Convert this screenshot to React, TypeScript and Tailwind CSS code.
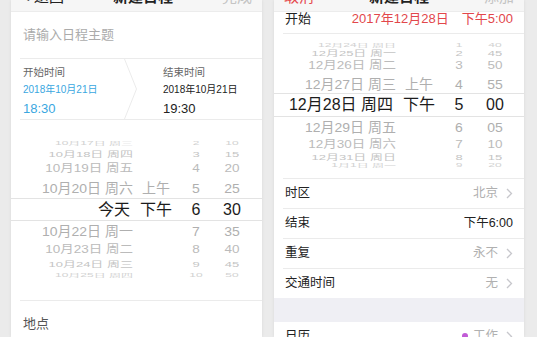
import React from "react";

type Row = { h: string; d: number; date: string; ap: string; hr: string; mn: string };

const distCls: Record<number, string> = {
  0: "text-[16px] text-[#1c1c1c]",
  1: "text-[14px] text-[#afafaf] scale-y-[0.95]",
  2: "text-[13.5px] text-[#bbbbbb] scale-y-[0.82]",
  3: "text-[13px] text-[#c4c4c4] scale-y-[0.62]",
  4: "text-[12px] text-[#d2d2d2] scale-y-[0.38]",
};

const leftRows: Row[] = [
  { h: "h-[10px]", d: 4, date: "10月17日 周三", ap: "", hr: "2", mn: "10" },
  { h: "h-[12px]", d: 3, date: "10月18日 周四", ap: "", hr: "3", mn: "15" },
  { h: "h-[18px]", d: 2, date: "10月19日 周五", ap: "", hr: "4", mn: "20" },
  { h: "h-[20px]", d: 1, date: "10月20日 周六", ap: "上午", hr: "5", mn: "25" },
  { h: "h-[23px]", d: 0, date: "今天", ap: "下午", hr: "6", mn: "30" },
  { h: "h-[20px]", d: 1, date: "10月22日 周一", ap: "", hr: "7", mn: "35" },
  { h: "h-[17px]", d: 2, date: "10月23日 周二", ap: "", hr: "8", mn: "40" },
  { h: "h-[12px]", d: 3, date: "10月24日 周三", ap: "", hr: "9", mn: "45" },
  { h: "h-[10px]", d: 4, date: "10月25日 周四", ap: "", hr: "10", mn: "50" },
];

const rightRows: Row[] = [
  { h: "h-[8px]", d: 4, date: "12月24日 周日", ap: "", hr: "1", mn: "40" },
  { h: "h-[9px]", d: 3, date: "12月25日 周一", ap: "", hr: "2", mn: "45" },
  { h: "h-[16px]", d: 2, date: "12月26日 周二", ap: "", hr: "3", mn: "50" },
  { h: "h-[19px]", d: 1, date: "12月27日 周三", ap: "上午", hr: "4", mn: "55" },
  { h: "h-[24px]", d: 0, date: "12月28日 周四", ap: "下午", hr: "5", mn: "00" },
  { h: "h-[20px]", d: 1, date: "12月29日 周五", ap: "", hr: "6", mn: "05" },
  { h: "h-[15px]", d: 2, date: "12月30日 周六", ap: "", hr: "7", mn: "10" },
  { h: "h-[10px]", d: 3, date: "12月31日 周日", ap: "", hr: "8", mn: "15" },
  { h: "h-[6px]", d: 4, date: "1月1日 周一", ap: "", hr: "9", mn: "20" },
];

function Picker({ rows }: { rows: Row[] }) {
  return (
    <div className="flex flex-col">
      {rows.map((r, i) => (
        <div
          key={i}
          className={`${r.h} shrink-0 flex items-center leading-none whitespace-nowrap ${
            r.d === 0 ? "border-y border-[#e3e3e3]" : ""
          }`}
        >
          <div className={`flex items-center w-full ${distCls[r.d]}`}>
            <span className={`w-[122px] text-right ${r.d === 0 ? "pr-[3px]" : ""}`}>{r.date}</span>
            <span className="ml-[6px] w-[34px] text-center">{r.ap}</span>
            <span className="ml-[8px] w-[30px] text-center">{r.hr}</span>
            <span className="ml-[6px] w-[30px] text-center">{r.mn}</span>
          </div>
        </div>
      ))}
    </div>
  );
}

function Chev() {
  return (
    <svg width="7" height="11" viewBox="0 0 7 11" className="ml-[8px]">
      <polyline points="1,1 5.5,5.5 1,10" fill="none" stroke="#c7c7cc" strokeWidth="1.3" />
    </svg>
  );
}

function Nav({ left, right, leftCls, rightCls }: { left: string; right: string; leftCls: string; rightCls: string }) {
  return (
    <div className="h-[12px] overflow-hidden bg-[#f6f6f6] border-b border-[#ececec]">
      <div className="h-[24px] -mt-[15px] flex items-center justify-between px-[10px] text-[15px]">
        <span className={leftCls}>{left}</span>
        <span className="font-bold text-[#222]">新建日程</span>
        <span className={rightCls}>{right}</span>
      </div>
    </div>
  );
}

function Divider({ inset = true }: { inset?: boolean }) {
  return <div className={`h-px bg-[#ebebeb] ${inset ? "ml-[9px]" : ""}`} />;
}

function ListRow({ label, value, dark, chevron }: { label: string; value: string; dark?: boolean; chevron?: boolean }) {
  return (
    <div className="h-[29px] flex items-center justify-between pl-[11px] pr-[11px] text-[12.5px]">
      <span className="text-[#222]">{label}</span>
      <span className="flex items-center">
        <span className={dark ? "text-[#222]" : "text-[#b0b0b0]"}>{value}</span>
        {chevron && <Chev />}
      </span>
    </div>
  );
}

export default function App() {
  return (
    <div className="w-[537px] h-[337px] overflow-hidden bg-[#ebebeb] flex items-start pl-[11px] [font-family:'Liberation_Sans','Noto_Sans_CJK_SC',sans-serif]">
      {/* Left phone */}
      <div className="w-[251px] h-[337px] overflow-hidden bg-white shrink-0 shadow-[0_0_3px_rgba(0,0,0,0.08)]">
        <Nav left="< 返回" right="完成" leftCls="text-[#222]" rightCls="text-[#c4c4c4]" />
        <div className="h-[46px] flex items-center pl-[12px] text-[13px] text-[#ababab]">请输入日程主题</div>
        <Divider />
        <div className="h-[60px] flex">
          <div className="w-[113px] pl-[12px] pt-[6px] flex flex-col">
            <span className="text-[10.5px] leading-[14px] text-[#666]">开始时间</span>
            <span className="mt-[4px] text-[10px] leading-[14px] text-[#3aa7df]">2018年10月21日</span>
            <span className="mt-[3px] text-[13px] leading-[18px] text-[#3aa7df]">18:30</span>
          </div>
          <svg width="14" height="60" viewBox="0 0 14 60">
            <polyline points="0.5,0 12.5,30 0.5,60" fill="none" stroke="#ebebeb" strokeWidth="1" />
          </svg>
          <div className="pl-[25px] pt-[6px] flex flex-col">
            <span className="text-[10.5px] leading-[14px] text-[#666]">结束时间</span>
            <span className="mt-[4px] text-[10px] leading-[14px] text-[#222]">2018年10月21日</span>
            <span className="mt-[3px] text-[13px] leading-[18px] text-[#222]">19:30</span>
          </div>
        </div>
        <Divider />
        <div className="pt-[18px] pb-[20px]">
          <Picker rows={leftRows} />
        </div>
        <Divider />
        <div className="h-[46px] flex items-center pl-[12px] text-[13px] text-[#555]">地点</div>
      </div>

      <div className="w-[12px] shrink-0" />

      {/* Right phone */}
      <div className="w-[250px] h-[337px] overflow-hidden bg-white shrink-0 shadow-[0_0_3px_rgba(0,0,0,0.08)]">
        <Nav left="取消" right="添加" leftCls="text-[#e5484d]" rightCls="text-[#c4c4c4]" />
        <div className="h-[21px] flex items-start justify-between pl-[11px] pr-[11px] text-[13px] leading-[14px]">
          <span className="text-[#222]">开始</span>
          <span className="text-[#e2474b] flex">
            <span>2017年12月28日</span>
            <span className="ml-[13px]">下午5:00</span>
          </span>
        </div>
        <Divider />
        <div className="pt-[7px] pb-[10px]">
          <Picker rows={rightRows} />
        </div>
        <Divider />
        <ListRow label="时区" value="北京" chevron />
        <Divider />
        <ListRow label="结束" value="下午6:00" dark />
        <Divider />
        <ListRow label="重复" value="永不" chevron />
        <Divider />
        <ListRow label="交通时间" value="无" chevron />
        <div className="h-[24px] bg-[#efeff4]" />
        <div className="h-[28px] flex items-center justify-between pl-[11px] pr-[11px] text-[12.5px]">
          <span className="text-[#222]">日历</span>
          <span className="flex items-center">
            <span className="w-[6px] h-[6px] rounded-full bg-[#c15bd6] mr-[5px]" />
            <span className="text-[#b0b0b0]">工作</span>
            <Chev />
          </span>
        </div>
      </div>
    </div>
  );
}
